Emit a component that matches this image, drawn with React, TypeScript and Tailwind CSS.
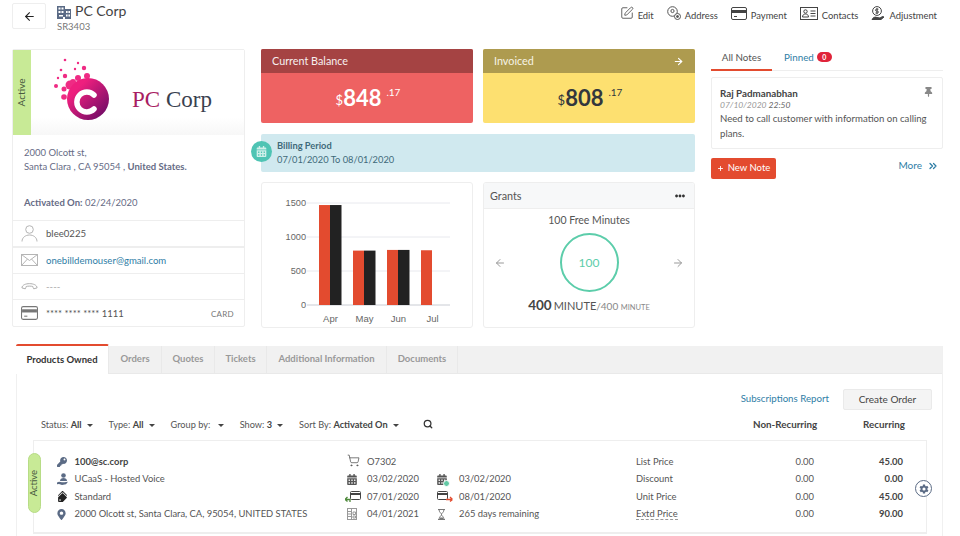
import { ArrowLeft, ArrowRight, ChevronsRight, Plus, Search, ShoppingCart, SquarePen } from "lucide-react"
import { FaCalendarAlt, FaEllipsisH, FaKey, FaMapMarkerAlt, FaTags, FaThumbtack } from "react-icons/fa"
import { IoSettingsSharp } from "react-icons/io5"

const BuildingIcon = () => (
    <svg viewBox="0 0 14 14" className="w-[14px] h-[14px] text-[#5a6a85]" fill="currentColor">
        <path d="M0 1h8v3h6v10H8v-2H6v2H0z" />
        <g fill="#fff">
            <rect x="1.5" y="2.5" width="2" height="2" />
            <rect x="4.5" y="2.5" width="2" height="2" />
            <rect x="1.5" y="6" width="2" height="2" />
            <rect x="4.5" y="6" width="2" height="2" />
            <rect x="9" y="6" width="1.6" height="2" />
            <rect x="11.4" y="6" width="1.6" height="2" />
            <rect x="9" y="9.5" width="1.6" height="2" />
            <rect x="11.4" y="9.5" width="1.6" height="2" />
            <rect x="2" y="10" width="4" height="1.5" />
        </g>
    </svg>
)

const AddressIcon = () => (
    <svg viewBox="0 0 14 14" className="w-[14px] h-[14px]" fill="none" stroke="#555" strokeWidth="1">
        <circle cx="5.5" cy="5.5" r="4.8" />
        <circle cx="5.5" cy="5" r="1.6" />
        <circle cx="10.5" cy="10.5" r="3" fill="#fff" />
        <circle cx="10.5" cy="10.5" r="1" fill="#555" />
    </svg>
)

const ContactsIcon = () => (
    <svg viewBox="0 0 18 13" className="w-[18px] h-[13px]" fill="none" stroke="#444" strokeWidth="1">
        <rect x="0.5" y="0.5" width="17" height="12" />
        <circle cx="5.5" cy="4.5" r="1.7" />
        <path d="M2.5 10c0-2 1.400-3 3-3s3 1 3 3z" />
        <path d="M10.500 4h5M10.500 6.500h5M10.500 9h5" />
    </svg>
)

const AdjustmentIcon = () => (
    <svg viewBox="0 0 14 14" className="w-[14px] h-[14px]" fill="none" stroke="#444" strokeWidth="1">
        <circle cx="6" cy="5" r="4.400" />
        <path d="M7.400 3.200H5.200a1 1 0 0 0 0 1.900h1.500a1 1 0 0 1 0 1.900H4.500M6 2v6" />
        <path d="M1 13.500c1-2 3-3 5-2l3 .5 2.500-1.500 1.500.5-3 2.500z" fill="#444" />
    </svg>
)

const UserIcon = () => (
    <svg viewBox="0 0 17 17" className="w-[17px] h-[17px]" fill="none" stroke="#b5b5b5" strokeWidth="1">
        <circle cx="8.500" cy="4.500" r="3.800" />
        <path d="M1 16.500c0-4 3.500-6.500 7.500-6.500s7.500 2.500 7.500 6.500" />
    </svg>
)

const MailIcon = () => (
    <svg viewBox="0 0 17 12" className="w-[17px] h-[12px]" fill="none" stroke="#b5b5b5" strokeWidth="1">
        <rect x="0.5" y="0.5" width="16" height="11" />
        <path d="M.5.500l8 6 8-6M.5 11.500l6-6.500M16.500 11.500l-6-6.500" />
    </svg>
)

const HangupIcon = () => (
    <svg viewBox="0 0 18 8" className="w-[17px] h-[8px]" fill="none" stroke="#aaa" strokeWidth="1">
        <path d="M1 6c0-3 4-4.500 8-4.500S17 3 17 6l-3.500 1c-.8-1-.7-2-1-2.500-1.500-.5-5.500-.5-7 0-.3.500-.2 1.500-1 2.500z" />
    </svg>
)

const CardIcon = ({ color = "#555", className = "w-[16px] h-[13px]" }: { color?: string; className?: string }) => (
    <svg viewBox="0 0 16 13" className={className} fill="none">
        <rect x="0.5" y="0.5" width="15" height="12" rx="1.500" stroke={color} />
        <rect x="1" y="3" width="14" height="3" fill={color} />
        <path d="M3 9.500h3" stroke={color} />
    </svg>
)

const CalCheckIcon = () => (
    <span className="relative flex">
        <FaCalendarAlt className="w-[10px] h-[11px] text-[#555]" />
        <span className="absolute -right-[3px] -bottom-[2px] w-[7px] h-[7px] rounded-full bg-[#63c9a5] border border-white" />
    </span>
)

const CardShape = ({ x }: { x: number }) => (
    <g>
        <rect x={x + 0.5} y="0.5" width="10" height="8" rx="1" stroke="#444" />
        <rect x={x + 1} y="2" width="9" height="2" fill="#444" />
    </g>
)

const CardArrowIcon = ({ dir }: { dir: "in" | "out" }) => (
    <svg viewBox="0 0 16 11" className="w-[16px] h-[11px]" fill="none">
        {dir === "in" ? (
            <>
                <CardShape x={5} />
                <path d="M0 8.500h5l0 2.500M0 8.500l2.500-2.500M0 8.500l2.500 2" stroke="#4f8a3c" strokeWidth="1.300" />
            </>
        ) : (
            <>
                <CardShape x={0} />
                <path d="M9 8.500h6M15.500 8.500l-2.500-2.500M15.500 8.500l-2.500 2" stroke="#e34b2f" strokeWidth="1.300" />
            </>
        )}
    </svg>
)

const RenewIcon = () => (
    <svg viewBox="0 0 10 12" className="w-[10px] h-[12px]" fill="none" stroke="#999" strokeWidth="1">
        <rect x="0.5" y="0.5" width="9" height="11" />
        <path d="M4.500.500v11M.5 3.500h4M.5 6h4M.5 8.500h4M6 4h2.500v2.500H6zM6 8h2.500v2H6z" />
    </svg>
)

const HourglassIcon = () => (
    <svg viewBox="0 0 9 11" className="w-[9px] h-[11px]" fill="none" stroke="#777" strokeWidth="1">
        <path d="M1 .5h7M1 10.500h7M2 .5c0 3 2.500 3.500 2.500 5S2 7.500 2 10.500M7 .5c0 3-2.500 3.500-2.500 5S7 7.500 7 10.500" />
        <path d="M3 8.500h3v2H3z" fill="#777" stroke="none" />
    </svg>
)

const HandUserIcon = () => (
    <svg viewBox="0 0 12 12" className="w-[12px] h-[12px]" fill="#5b6b85">
        <circle cx="6.500" cy="2.500" r="2.300" />
        <path d="M3 8c0-2 1.500-3 3.500-3S10 6 10 8z" />
        <path d="M0 9.500l2-.8 3 .6h2.500l3.500-.5-2 2.500-4 .7-3-1-2 .3z" />
    </svg>
)

const Logo = () => (
    <svg viewBox="0 0 62 70" className="w-[62px] h-[70px]">
        <defs>
            <linearGradient id="logoFill" x1="0" y1="0" x2="1" y2="1">
                <stop offset="0.25" stopColor="#ee1f7e" />
                <stop offset="1" stopColor="#5e0a63" />
            </linearGradient>
        </defs>
        <g fill="#ef2b84">
            <circle cx="15" cy="2" r="1.300" />
            <circle cx="28" cy="5" r="1.200" />
            <circle cx="11" cy="12" r="1.300" />
            <circle cx="25" cy="11" r="1.200" />
            <circle cx="34" cy="10" r="2.200" />
            <circle cx="15" cy="18" r="2.200" />
            <circle cx="8" cy="20" r="1.200" />
            <circle cx="6" cy="28" r="2" />
            <circle cx="28" cy="20" r="3" />
            <circle cx="14" cy="31" r="2.500" />
            <circle cx="37" cy="18" r="3" />
            <circle cx="20" cy="27" r="4.500" />
            <circle cx="14" cy="39" r="2.800" />
            <circle cx="23" cy="24" r="3" />
        </g>
        <circle cx="38" cy="41" r="21" fill="url(#logoFill)" />
        <path d="M44 37a10 10 0 1 0 0 14" fill="none" stroke="#fff" strokeWidth="5.500" strokeLinecap="round" />
    </svg>
)

const BarChart = () => {
    const groups = [
        { label: "Apr", x: 318, a: 1470, b: 1470 },
        { label: "May", x: 352, a: 800, b: 800 },
        { label: "Jun", x: 386, a: 810, b: 810 },
        { label: "Jul", x: 420, a: 805, b: 0 },
    ]
    const y = (v: number) => 305 - (v / 1500) * 102
    return (
        <svg viewBox="262 183 210 144" className="w-full h-full">
            {[0, 500, 1000, 1500].map((t) => (
                <g key={t}>
                    <line x1="307" x2="450" y1={y(t)} y2={y(t)} stroke={t === 0 ? "#c9ccd3" : "#e8e9ee"} strokeWidth="1" />
                    <text x="306" y={y(t) + 3} textAnchor="end" fontSize="9.200" fill="#666" fontFamily="Liberation Sans, sans-serif">{t}</text>
                </g>
            ))}
            {groups.map((g) => (
                <g key={g.label}>
                    <rect x={g.x + 1} y={y(g.a)} width="11" height={305 - y(g.a)} fill="#e34b2f" />
                    {g.b > 0 && <rect x={g.x + 12} y={y(g.b)} width="11.500" height={305 - y(g.b)} fill="#222222" />}
                    <text x={g.x + 12.500} y="322" textAnchor="middle" fontSize="9.500" fill="#666" fontFamily="Liberation Sans, sans-serif">{g.label}</text>
                </g>
            ))}
        </svg>
    )
}

const actions = [
    { label: "Edit", icon: <SquarePen className="w-[14px] h-[14px] text-[#444]" strokeWidth={1.4} /> },
    { label: "Address", icon: <AddressIcon /> },
    { label: "Payment", icon: <CardIcon color="#444" /> },
    { label: "Contacts", icon: <ContactsIcon /> },
    { label: "Adjustment", icon: <AdjustmentIcon /> },
]

const tabs = [
    { label: "Orders", width: "w-[53px]" },
    { label: "Quotes", width: "w-[53px]" },
    { label: "Tickets", width: "w-[52px]" },
    { label: "Additional Information", width: "w-[120px]" },
    { label: "Documents", width: "w-[71px]" },
]

const filters = [
    { label: "Status:", value: "All" },
    { label: "Type:", value: "All" },
    { label: "Group by:", value: "" },
    { label: "Show:", value: "3" },
    { label: "Sort By:", value: "Activated On" },
]

const CalIcon = () => <FaCalendarAlt className="w-[10px] h-[11px] text-[#555]" />

const Caret = () => <span className="inline-block ml-[5px] mb-[1px] border-x-[3px] border-t-[3px] border-x-transparent border-t-[#444]" />

export default function App() {
    const rows = [
        {
            icon: <FaKey className="w-[10px] h-[10px] text-[#5b6b85]" />, text: <b className="font-bold text-[#444]">100@sc.corp</b>,
            icon2: <ShoppingCart className="w-[13px] h-[13px] text-[#444] -mt-[3px]" strokeWidth={1.3} />, text2: "O7302", icon3: null, text3: "",
            price: "List Price", non: "0.00", rec: "45.00",
        },
        {
            icon: <HandUserIcon />, text: "UCaaS - Hosted Voice",
            icon2: <CalIcon />, text2: "03/02/2020", icon3: <CalCheckIcon />, text3: "03/02/2020",
            price: "Discount", non: "0.00", rec: "0.00",
        },
        {
            icon: <FaTags className="w-[11px] h-[11px] text-[#222] -rotate-90" />, text: "Standard",
            icon2: <span className="-ml-[2px] flex"><CardArrowIcon dir="in" /></span>, text2: "07/01/2020", icon3: <CardArrowIcon dir="out" />, text3: "08/01/2020",
            price: "Unit Price", non: "0.00", rec: "45.00",
        },
        {
            icon: <FaMapMarkerAlt className="w-[9px] h-[11px] text-[#5b6b85]" />, text: "2000 Olcott st, Santa Clara, CA, 95054, UNITED STATES",
            icon2: <RenewIcon />, text2: "04/01/2021", icon3: <HourglassIcon />, text3: "265 days remaining",
            price: "Extd Price", non: "0.00", rec: "90.00",
        },
    ]

    return (
        <div className="w-[960px] h-[536px] overflow-hidden bg-white text-[#555] font-['Lato',sans-serif] text-[10px]">
            {/* header */}
            <div className="h-[49px] pl-3 pr-[23px] flex items-start">
                <button className="mt-[3px] w-[34px] h-[26px] flex items-center justify-center bg-white border border-[#eeeeee] rounded-[2px]">
                    <ArrowLeft className="w-[13px] h-[13px] text-[#222]" strokeWidth={2} />
                </button>
                <div className="ml-[11px] mt-[3px]">
                    <div className="flex items-center gap-[4px] h-[17px]">
                        <BuildingIcon />
                        <span className="-mt-[1px] text-[14px] leading-none text-[#444]">PC Corp</span>
                    </div>
                    <div className="mt-[1px] text-[9.500px] leading-[12px] text-[#777]">SR3403</div>
                </div>
                <div className="ml-auto flex items-center gap-[13px] mt-[5px]">
                    {actions.map((a) => (
                        <div key={a.label} className="flex items-center gap-[4px] h-[16px] text-[#444]">
                            {a.icon}
                            <span className="mt-[5px] text-[9.400px] leading-none">{a.label}</span>
                        </div>
                    ))}
                </div>
            </div>

            {/* top section */}
            <div className="pl-3 flex items-start h-[280px]">
                {/* customer card */}
                <div className="w-[233px] h-[278px] shrink-0 border border-[#eeeeee] rounded-[2px] flex flex-col">
                    <div className="h-[85px] flex shrink-0">
                        <div className="w-[18px] bg-[#c8ea96] flex items-center justify-center">
                            <span className="-rotate-90 text-[10px] text-[#4a5a40] whitespace-nowrap">Active</span>
                        </div>
                        <div className="flex-1 flex items-center pl-[19px] bg-gradient-to-b from-white from-80% to-[#f7f7f7]">
                            <Logo />
                            <div className="ml-[20px] mt-[14px] font-['Liberation_Serif',serif] text-[23px] leading-none">
                                <span className="text-[#a81d62]">PC</span> <span className="text-[#39414f]">Corp</span>
                            </div>
                        </div>
                    </div>
                    <div className="h-[85px] shrink-0 pl-[11px] pt-[11px] text-[9.500px] leading-[14px] text-[#666b85]">
                        <div>2000 Olcott st,</div>
                        <div>Santa Clara , CA 95054 , <b className="font-bold">United States.</b></div>
                        <div className="mt-[22px]"><b className="font-bold">Activated On:</b> 02/24/2020</div>
                    </div>
                    <div className="h-[26px] border-t border-[#eeeeee] flex items-center pl-[8px]">
                        <UserIcon />
                        <span className="ml-[8px] mt-[2px] text-[9.600px] text-[#555]">blee0225</span>
                    </div>
                    <div className="h-[27px] border-t-2 border-[#eeeeee] flex items-center pl-[8px]">
                        <MailIcon />
                        <span className="ml-[8px] mt-[2px] text-[9.600px] text-[#2f7ea6]">onebilldemouser@gmail.com</span>
                    </div>
                    <div className="h-[27px] border-t border-[#eeeeee] flex items-center pl-[8px]">
                        <HangupIcon />
                        <span className="ml-[8px] mt-[2px] text-[9.600px] text-[#aaa]">----</span>
                    </div>
                    <div className="h-[27px] border-t border-[#eeeeee] flex items-center pl-[8px] pr-[10px]">
                        <CardIcon color="#777" className="w-[17px] h-[14px]" />
                        <span className="ml-[8px] mt-[2px] text-[9.500px] text-[#555]">**** **** **** 1111</span>
                        <span className="ml-auto mt-[2px] text-[8px] text-[#777] tracking-[0.3px]">CARD</span>
                    </div>
                </div>

                {/* balances column */}
                <div className="w-[434px] ml-[16px] shrink-0 flex flex-col">
                    <div className="flex gap-[10px]">
                        <div className="w-[212px] h-[74px] rounded-[2px] overflow-hidden bg-[#ee6262]">
                            <div className="h-[24px] bg-[#a54343] flex items-center px-[11px] text-[10.800px] text-[#f6f0f0]">Current Balance</div>
                            <div className="h-[50px] pl-[2px] flex items-center justify-center text-white font-bold">
                                <span className="mt-[5px] text-[13px] font-normal">$</span>
                                <span className="text-[22px] leading-none">848</span>
                                <span className="ml-[5px] -mt-[12px] text-[10px] font-normal">.17</span>
                            </div>
                        </div>
                        <div className="w-[212px] h-[74px] rounded-[2px] overflow-hidden bg-[#fde070]">
                            <div className="h-[24px] bg-[#ae9b4f] flex items-center justify-between px-[11px] text-[10.800px] text-[#f7f4e6]">
                                Invoiced
                                <ArrowRight className="w-[11px] h-[11px] text-white" strokeWidth={2.5} />
                            </div>
                            <div className="h-[50px] pl-[2px] flex items-center justify-center text-[#33373d] font-bold">
                                <span className="mt-[5px] text-[13px] font-normal">$</span>
                                <span className="text-[22px] leading-none">808</span>
                                <span className="ml-[5px] -mt-[12px] text-[10px] font-normal">.17</span>
                            </div>
                        </div>
                    </div>

                    <div className="relative mt-[11px] h-[38px] rounded-[2px] bg-[#d0e9ef] pl-[16px] pt-[5px] text-[9.300px] leading-[14px] text-[#3f6a7a]">
                        <div className="absolute -left-[10px] top-[7px] w-[21px] h-[21px] rounded-full bg-[#4fc4b4] flex items-center justify-center">
                            <FaCalendarAlt className="w-[11px] h-[11px] text-[#d0f0ea]" />
                        </div>
                        <div className="font-bold">Billing Period</div>
                        <div>07/01/2020 To 08/01/2020</div>
                    </div>

                    <div className="mt-[10px] flex gap-[10px]">
                        <div className="w-[212px] h-[146px] border border-[#eeeeee] rounded-[3px] overflow-hidden">
                            <BarChart />
                        </div>
                        <div className="w-[212px] h-[146px] border border-[#eeeeee] rounded-[3px] overflow-hidden flex flex-col">
                            <div className="h-[26px] shrink-0 pt-[1px] bg-[#f7f8f9] border-b border-[#eeeeee] flex items-center justify-between pl-[6px] pr-[9px] text-[10.800px] text-[#555]">
                                Grants
                                <FaEllipsisH className="w-[10px] h-[10px] text-[#333]" />
                            </div>
                            <div className="text-center mt-[5px] text-[10.500px] leading-[13px] text-[#555]">100 Free Minutes</div>
                            <div className="flex items-center justify-between px-[10px] mt-[6px]">
                                <ArrowLeft className="w-[12px] h-[12px] text-[#999]" strokeWidth={2} />
                                <div className="w-[59px] h-[59px] rounded-full border-2 border-[#5ccdaa] flex items-center justify-center text-[12px] text-[#5ccdaa]">100</div>
                                <ArrowRight className="w-[12px] h-[12px] text-[#999]" strokeWidth={2} />
                            </div>
                            <div className="text-center mt-[5px] text-[#555] leading-[16px]">
                                <b className="text-[13.500px] font-bold text-[#444]">400</b>
                                <span className="ml-[2px] text-[11px]">MINUTE</span>
                                <span className="text-[10px] text-[#888]">/400 </span>
                                <span className="text-[7.500px] text-[#888]">MINUTE</span>
                            </div>
                        </div>
                    </div>
                </div>

                {/* notes */}
                <div className="w-[232px] ml-[16px] shrink-0">
                    <div className="flex h-[22px] border-b border-[#eeeeee] text-[9.800px]">
                        <div className="w-[61px] h-[22px] border-b-2 border-[#e34b2f] text-center pt-[1px] text-[#555]">All Notes</div>
                        <div className="ml-[12px] pt-[1px] text-[#2f7ea6] flex items-start gap-[3px]">
                            Pinned
                            <span className="mt-[2px] w-[15px] h-[10px] rounded-full bg-[#e0243a] text-white text-[7px] leading-[10px] text-center font-bold">0</span>
                        </div>
                    </div>
                    <div className="relative mt-[6px] h-[72px] border border-[#eeeeee] rounded-[2px] pl-[8px] pr-[6px] pt-[8px]">
                        <FaThumbtack className="absolute right-[9px] top-[9px] w-[9px] h-[10px] text-[#888]" />
                        <div className="text-[9.800px] leading-[14px] font-bold text-[#444]">Raj Padmanabhan</div>
                        <div className="text-[8.500px] leading-[11px] italic text-[#999]">07/10/2020 <span className="text-[#666]">22:50</span></div>
                        <div className="text-[9.600px] leading-[15px] text-[#555]">Need to call customer with information on calling plans.</div>
                    </div>
                    <div className="mt-[9px] flex items-center justify-between pr-[4px]">
                        <button className="w-[65px] h-[21px] bg-[#e34b2f] rounded-[2px] text-white text-[9.500px] flex items-center justify-center gap-[4px]">
                            <Plus className="w-[7px] h-[7px]" strokeWidth={3} />
                            New Note
                        </button>
                        <div className="-mt-[6px] flex items-center gap-[5px] text-[10px] text-[#2f7ea6]">
                            More
                            <ChevronsRight className="w-[12px] h-[12px]" strokeWidth={2.5} />
                        </div>
                    </div>
                </div>
            </div>

            {/* tabs */}
            <div className="ml-[16px] mt-[17px] w-[927px] h-[190px] border-x border-[#f0f0f0]">
                <div className="h-[28px] bg-[#f1f1f1] border-b border-[#e9e9e9] flex items-stretch text-[9.500px] font-bold">
                    <div className="relative w-[93px] h-[30px] -mt-[2px] -ml-[1px] bg-white border-t-2 border-t-[#e34b2f] border-r border-r-[#e9e9e9] rounded-t-[2px] flex items-center justify-center text-[#333]">Products Owned</div>
                    {tabs.map((t) => (
                        <div key={t.label} className={`${t.width} flex items-center justify-center border-r border-[#e9e9e9] text-[#999]`}>{t.label}</div>
                    ))}
                </div>

                <div className="pt-[15px] pl-[24px] pr-[10px] flex items-center justify-end h-[36px]">
                    <span className="mr-[14px] mb-[3px] text-[9.700px] text-[#2f7ea6]">Subscriptions Report</span>
                    <button className="w-[89px] h-[21px] bg-[#f4f4f4] border border-[#eaeaea] rounded-[2px] text-[10px] text-[#444]">Create Order</button>
                </div>

                <div className="h-[30px] pb-[1px] pl-[24px] flex items-center text-[9.200px] text-[#555]">
                    <div className="flex items-center gap-[16px] w-[410px]">
                        {filters.map((f) => (
                            <span key={f.label} className="whitespace-nowrap">
                                {f.label} <b className="font-bold text-[#444]">{f.value}</b>
                                <Caret />
                            </span>
                        ))}
                        <Search className="ml-[8px] w-[10px] h-[10px] text-[#333] shrink-0" strokeWidth={3} />
                    </div>
                    <div className="ml-[302px] w-[64px] text-[9.800px] text-right font-bold text-[#444] whitespace-nowrap">Non-Recurring</div>
                    <div className="ml-[45px] w-[43px] text-[9.800px] text-right font-bold text-[#444]">Recurring</div>
                </div>

                {/* product row */}
                <div className="relative ml-[16px] w-[894px] h-[94px] border border-[#eeeeee] border-b-2 pl-[23px] pt-[12px]">
                    <div className="absolute -left-[6px] top-[12px] w-[13px] h-[60px] rounded-full bg-[#c8ea96] border border-[#b7dc86] flex items-center justify-center">
                        <span className="-rotate-90 text-[9.500px] text-[#4a5a40]">Active</span>
                    </div>
                    <div className="absolute -right-[6px] top-[39px] w-[17px] h-[17px] rounded-full bg-white border border-[#5b6b85] flex items-center justify-center">
                        <IoSettingsSharp className="w-[10px] h-[10px] text-[#5b6b85]" />
                    </div>
                    <div className="grid grid-cols-[290px_90px_199px_178px_89px] auto-rows-[17.500px] items-center text-[9.400px] text-[#555]">
                        {rows.map((r) => (
                            <div key={r.price} className="contents">
                                <div className="flex items-center whitespace-nowrap">
                                    <span className="w-[17.500px] flex">{r.icon}</span>
                                    <span>{r.text}</span>
                                </div>
                                <div className="flex items-center">
                                    <span className="w-[20px] flex">{r.icon2}</span>
                                    <span>{r.text2}</span>
                                </div>
                                <div className="flex items-center">
                                    <span className="w-[22px] flex">{r.icon3}</span>
                                    <span>{r.text3}</span>
                                </div>
                                <div>
                                    <span className={r.price === "Extd Price" ? "border-b border-dashed border-[#999]" : ""}>{r.price}</span>
                                </div>
                                <div className="flex justify-between">
                                    <span className="w-[178px] text-right -ml-[178px]">{r.non}</span>
                                    <b className="font-bold text-[#444]">{r.rec}</b>
                                </div>
                            </div>
                        ))}
                    </div>
                </div>
            </div>
        </div>
    )
}
